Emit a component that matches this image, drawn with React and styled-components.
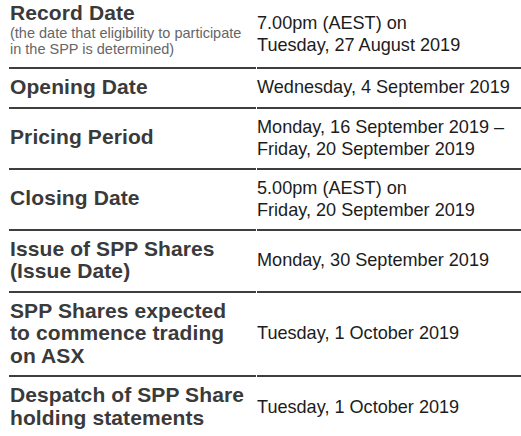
import styled, { createGlobalStyle } from "styled-components";

const GlobalStyle = createGlobalStyle`
  html, body {
    margin: 0;
    padding: 0;
    background: #ffffff;
  }
  body {
    font-family: "Liberation Sans", Arial, sans-serif;
  }
`;

const rows = [
  {
    label: "Record Date",
    note: "(the date that eligibility to participate in the SPP is determined)",
    value: ["7.00pm (AEST) on", "Tuesday, 27 August 2019"],
  },
  { label: "Opening Date", value: ["Wednesday, 4 September 2019"] },
  {
    label: "Pricing Period",
    value: ["Monday, 16 September 2019 –", "Friday, 20 September 2019"],
  },
  {
    label: "Closing Date",
    value: ["5.00pm (AEST) on", "Friday, 20 September 2019"],
  },
  {
    label: ["Issue of SPP Shares", "(Issue Date)"],
    value: ["Monday, 30 September 2019"],
  },
  {
    label: ["SPP Shares expected", "to commence trading", "on ASX"],
    value: ["Tuesday, 1 October 2019"],
  },
  {
    label: ["Despatch of SPP Share", "holding statements"],
    value: ["Tuesday, 1 October 2019"],
  },
];

export default function App() {
  return (
    <>
      <GlobalStyle />
      <Timetable>
        {rows.map((row, i) => {
          const last = i === rows.length - 1;
          const label = Array.isArray(row.label) ? row.label : [row.label];
          return (
            <Row key={i}>
              <LabelCell $last={last} $first={i === 0}>
                <div>
                  {label.map((l) => (
                    <Label key={l}>{l}</Label>
                  ))}
                  {row.note && <Note>{row.note}</Note>}
                </div>
              </LabelCell>
              <ValueCell $last={last} $first={i === 0}>
                <div>
                  {row.value.map((v) => (
                    <Value key={v}>{v}</Value>
                  ))}
                </div>
              </ValueCell>
            </Row>
          );
        })}
      </Timetable>
    </>
  );
}

const Timetable = styled.div`
  padding-left: 9px;
  width: 512px;
`;

const Row = styled.div`
  display: grid;
  grid-template-columns: 247px 1fr;
  column-gap: 1px;
`;

const Cell = styled.div`
  display: flex;
  align-items: center;
  padding: 7px 0 8px;
  border-bottom: ${(p) => (p.$last ? "none" : "2px solid #3e3e3e")};
`;

const LabelCell = styled(Cell)`
  padding-left: 1px;
  ${(p) => p.$first && "padding-top: 2px; padding-bottom: 9.5px;"}
`;

const ValueCell = styled(Cell)`
  ${(p) => p.$first && "padding-top: 4px; padding-bottom: 3px;"}
`;

const Label = styled.div`
  font-size: 21px;
  font-weight: 700;
  line-height: 22.5px;
  color: #3a3a3a;
  letter-spacing: 0.1px;
  white-space: nowrap;
`;

const Note = styled.div`
  font-size: 14.5px;
  line-height: 16.5px;
  color: #666666;
  width: 240px;
`;

const Value = styled.div`
  font-size: 18.1px;
  line-height: 22px;
  color: #1c1c1c;
  white-space: nowrap;
`;
